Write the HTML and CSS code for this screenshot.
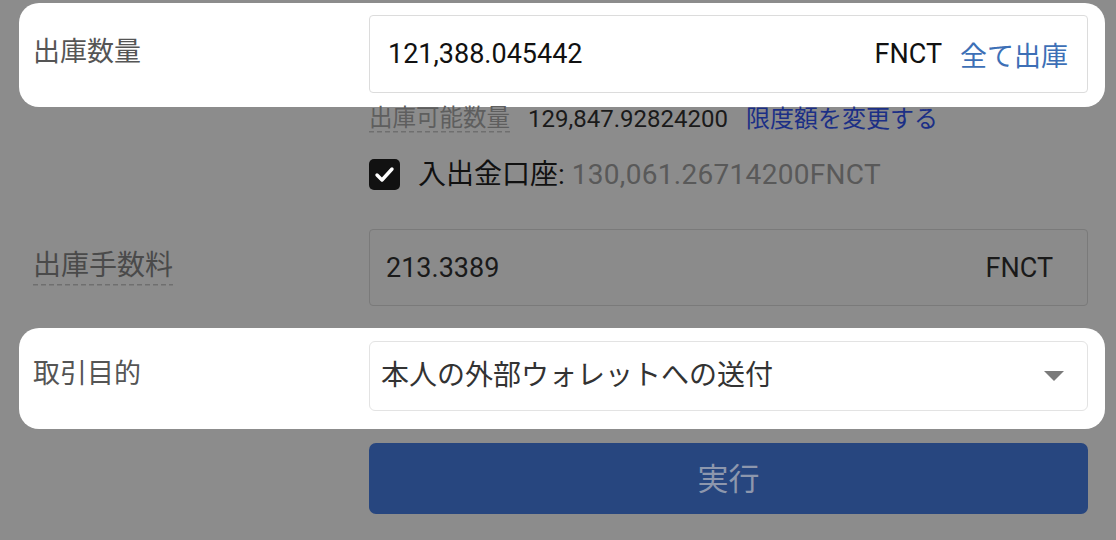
FILE: index.html
```
<!doctype html>
<html>
<head>
<meta charset="UTF-8"/>
<link rel="stylesheet" href="styles.css">
<title>出庫</title>
</head>
<body>
<section class="form">
  <div class="row spot spot-amount">
    <div class="label">出庫数量</div>
    <div class="field input">
      <span class="value">121,388.045442</span>
      <span class="unit">FNCT</span>
      <a class="all" href="#">全て出庫</a>
    </div>
  </div>
  <div class="sub hint">
    <span class="dashed">出庫可能数量</span>
    <span class="avail">129,847.92824200</span>
    <a class="limit" href="#">限度額を変更する</a>
  </div>
  <div class="sub account">
    <span class="check">
      <svg width="31" height="31" viewBox="0 0 31 31"><path d="M8 16 L13 21 L23 10" fill="none" stroke="#fff" stroke-width="3.4" stroke-linecap="round" stroke-linejoin="round"/></svg>
    </span>
    <span class="acc-name">入出金口座: <span class="acc-val">130,061.26714200FNCT</span></span>
  </div>
  <div class="row fee">
    <div class="label"><span class="dashed">出庫手数料</span></div>
    <div class="field input disabled">
      <span class="value">213.3389</span>
      <span class="unit">FNCT</span>
    </div>
  </div>
  <div class="row spot spot-purpose">
    <div class="label">取引目的</div>
    <div class="field select">
      <span class="value">本人の外部ウォレットへの送付</span>
      <span class="caret"></span>
    </div>
  </div>
  <div class="sub">
    <button class="submit">実行</button>
  </div>
</section>
</body>
</html>
```

FILE: styles.css
```
body {
  margin: 0;
  background: #8c8c8c;
  font-family: Roboto, "Noto Sans CJK JP", sans-serif;
  color: #111;
}
a {
  text-decoration: none;
}
.form {
  width: 1116px;
  box-sizing: border-box;
  padding: 3px 11px 0 19px;
}
.row {
  display: flex;
  align-items: center;
  padding: 0 17px 0 14px;
}
.label {
  width: 336px;
  flex: none;
  font-size: 27px;
  padding-bottom: 10px;
}
.field {
  flex: 1;
  box-sizing: border-box;
  display: flex;
  align-items: center;
}
.sub {
  padding-left: 350px;
  padding-right: 17px;
  display: flex;
  align-items: center;
}
.dashed {
  padding-bottom: 4px;
  background: repeating-linear-gradient(to right, #6f6f6f 0 5px, transparent 5px 8px) left bottom / 100% 1.5px no-repeat;
}

/* highlighted rows */
.spot {
  background: #fff;
  border-radius: 20px;
}
.spot .label {
  color: #555;
}
.spot-amount {
  padding-top: 12px;
  padding-bottom: 14px;
}
.spot-purpose {
  margin-top: 22px;
  padding-top: 13px;
  padding-bottom: 18px;
}

.input {
  height: 78px;
  border: 1px solid #dcdcdc;
  border-radius: 4px;
  padding: 0 19px 0 18px;
  font-size: 27px;
  background: #fff;
}
.input .value {
  flex: 1;
}
.all {
  margin-left: 18px;
  color: #3d6fb6;
}
.input.disabled {
  height: 77px;
  background: #8b8b8b;
  border-color: #7a7a7a;
  padding: 0 34px 0 16px;
  color: #1a1a1a;
}

.hint {
  height: 24px;
  line-height: 24px;
  font-size: 23.5px;
}
.hint .dashed {
  color: #5e5e5e;
  line-height: 24px;
  padding-bottom: 3px;
}
.avail {
  margin-left: 18px;
  color: #1a1a1a;
  font-size: 24px;
}
.limit {
  margin-left: 18px;
  color: #1b2f86;
  font-size: 24px;
}

.account {
  margin-top: 28px;
  height: 31px;
  font-size: 28px;
}
.check {
  width: 31px;
  height: 31px;
  border-radius: 5px;
  background: #111;
  margin-right: 18px;
  display: flex;
}
.acc-name {
  padding-bottom: 5px;
}
.acc-val {
  color: #595959;
  letter-spacing: 0.3px;
}

.fee {
  margin-top: 39px;
}
.fee .label {
  color: #4a4a4a;
  font-size: 28px;
}

.select {
  height: 70px;
  border: 1px solid #e3e3e3;
  border-radius: 6px;
  padding: 0 23px 0 11px;
  font-size: 28px;
  color: #333;
}
.select .value {
  flex: 1;
  padding-bottom: 7px;
}
.caret {
  width: 0;
  height: 0;
  border-left: 10px solid transparent;
  border-right: 10px solid transparent;
  border-top: 10px solid #7a7a7a;
}

.submit {
  margin-top: 14px;
  width: 100%;
  height: 71px;
  border: none;
  border-radius: 7px;
  background: #27467f;
  color: #8d97ad;
  font-family: Roboto, "Noto Sans CJK JP", sans-serif;
  font-size: 31px;
  padding-bottom: 6px;
}
```
